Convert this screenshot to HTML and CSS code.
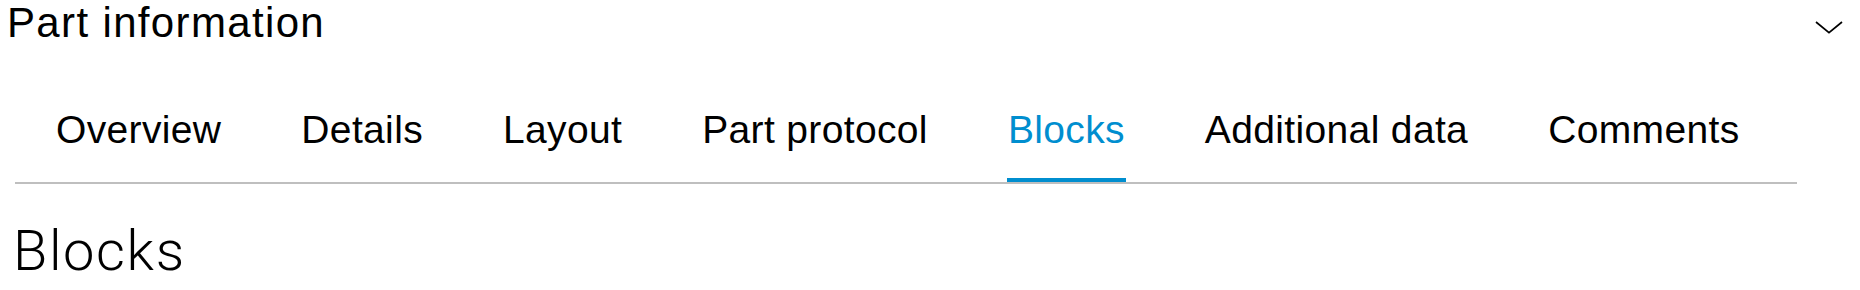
FILE: index.html
```html
<!DOCTYPE html>
<html lang="en">
<head>
<meta charset="utf-8">
<title>Part information</title>
<link rel="stylesheet" href="styles.css">
</head>
<body>
<div class="page">
  <header class="panel-head">
    <h2 class="panel-title">Part information</h2>
    <button class="toggle" type="button" aria-label="Collapse">
      <svg class="chevron" width="28" height="14" viewBox="0 0 28 14" aria-hidden="true">
        <polyline points="1,1 14,11.6 27,1" fill="none" stroke="#000" stroke-width="1.7"/>
      </svg>
    </button>
  </header>
  <nav class="tabs">
    <a class="tab" href="#">Overview</a>
    <a class="tab" href="#">Details</a>
    <a class="tab" href="#">Layout</a>
    <a class="tab" href="#">Part protocol</a>
    <a class="tab active" href="#">Blocks</a>
    <a class="tab" href="#">Additional data</a>
    <a class="tab" href="#">Comments</a>
  </nav>
  <h1 class="section-title">Blocks</h1>
</div>
</body>
</html>
```

FILE: styles.css
```css
html, body {
  margin: 0;
  padding: 0;
  background: #ffffff;
}

.page {
  font-family: "Liberation Sans", Arial, sans-serif;
  color: #000000;
}

.panel-head {
  display: flex;
  justify-content: space-between;
  align-items: flex-start;
  height: 44px;
  padding: 2px 17px 0 7px;
  box-sizing: border-box;
}

.panel-title {
  margin: 0;
  font-size: 42px;
  line-height: 42px;
  font-weight: 400;
  letter-spacing: 1.35px;
}

.toggle {
  margin-top: 19px;
  padding: 0;
  border: none;
  background: none;
  width: 28px;
  height: 14px;
  cursor: pointer;
}

.chevron {
  display: block;
}

.tabs {
  display: flex;
  gap: 78px;
  margin: 66px 63px 0 15px;
  padding-left: 40px;
  border-bottom: 2px solid #bfbfbf;
}

.tab {
  display: block;
  padding: 0 1px 29px;
  font-size: 39px;
  line-height: 39px;
  letter-spacing: 0.35px;
  color: #000000;
  text-decoration: none;
  border-bottom: 4px solid transparent;
}

.tab.active {
  color: #008ecf;
  border-bottom-color: #008ecf;
}

.section-title {
  margin: 40px 0 0 13px;
  font-family: Roboto, "Liberation Sans", sans-serif;
  font-size: 56px;
  line-height: 55px;
  font-weight: 300;
  letter-spacing: 1.6px;
}
```
